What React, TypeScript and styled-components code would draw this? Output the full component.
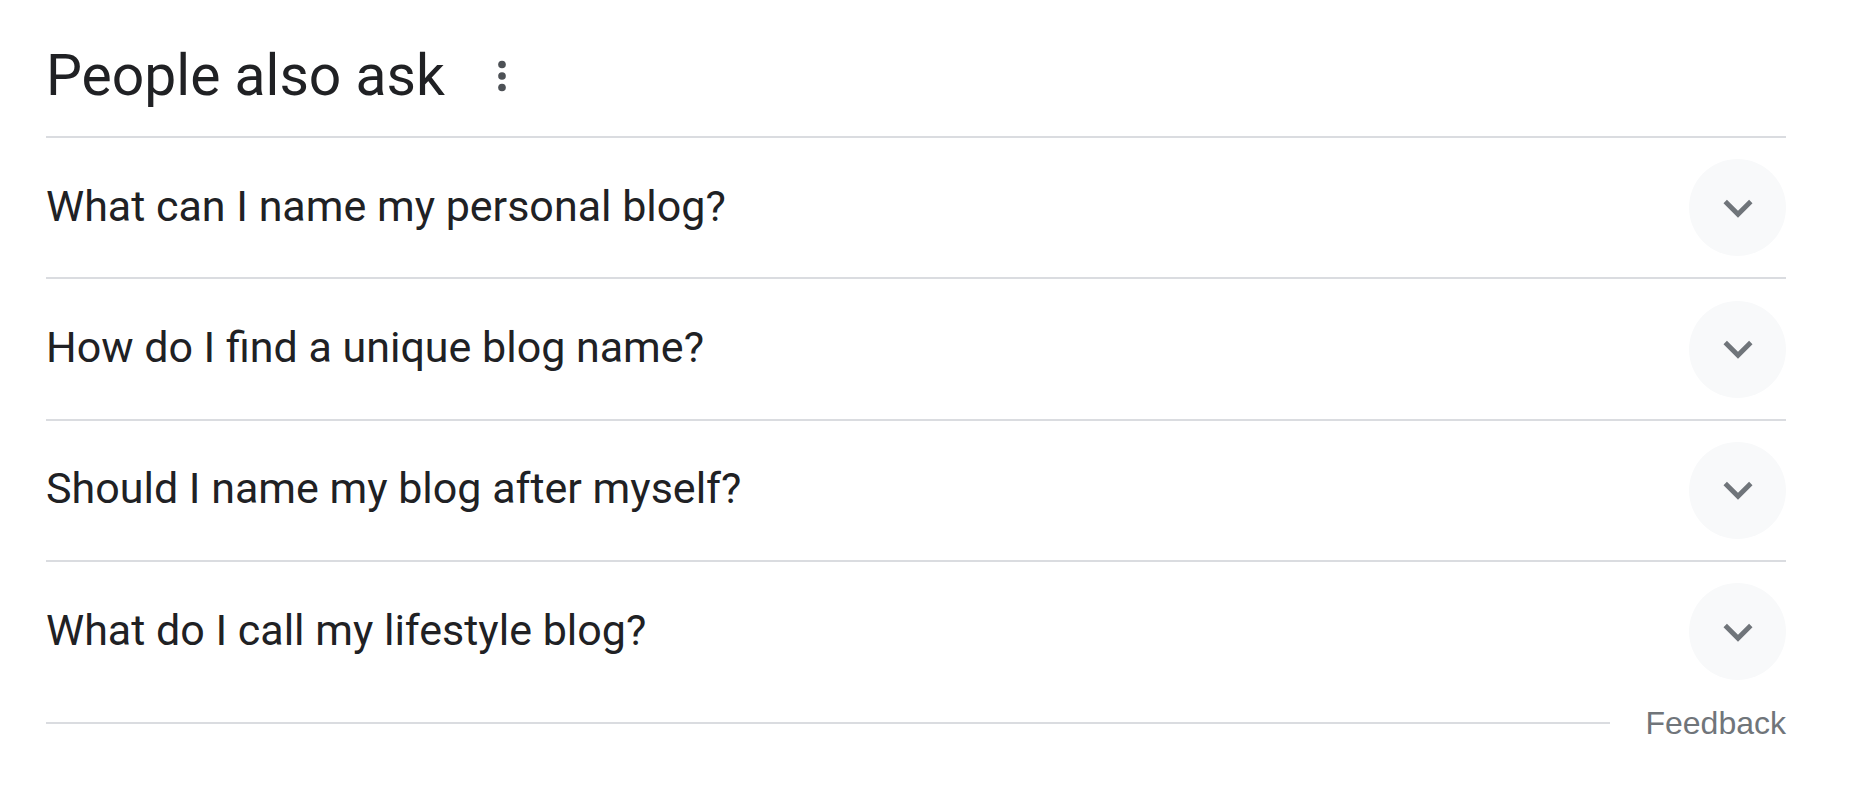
import React from "react";
import styled, { createGlobalStyle } from "styled-components";

const GlobalStyle = createGlobalStyle`
  html, body {
    margin: 0;
    padding: 0;
    background: #ffffff;
  }
  body {
    font-family: Roboto, "Noto Sans", Arial, sans-serif;
    color: #202124;
  }
`;

const questions = [
  "What can I name my personal blog?",
  "How do I find a unique blog name?",
  "Should I name my blog after myself?",
  "What do I call my lifestyle blog?",
];

const App: React.FC = () => {
  return (
    <>
      <GlobalStyle />
      <Section>
        <Header>
          <Title>People also ask</Title>
          <MenuButton aria-label="About this result">
            <svg width="46" height="46" viewBox="0 0 24 24">
              <circle cx="12" cy="6" r="2" fill="#4d5156" />
              <circle cx="12" cy="12" r="2" fill="#4d5156" />
              <circle cx="12" cy="18" r="2" fill="#4d5156" />
            </svg>
          </MenuButton>
        </Header>
        {questions.map((q) => (
          <Row key={q}>
            <Question>{q}</Question>
            <ExpandButton aria-label="Expand">
              <svg width="58" height="58" viewBox="0 0 24 24">
                <path
                  d="M16.59 8.59L12 13.17 7.41 8.59 6 10l6 6 6-6z"
                  fill="#70757a"
                />
              </svg>
            </ExpandButton>
          </Row>
        ))}
        <FooterRow>
          <Rule />
          <Feedback>Feedback</Feedback>
        </FooterRow>
      </Section>
    </>
  );
};

export default App;

const Section = styled.div`
  width: 1740px;
  margin-left: 46px;
`;

const Header = styled.div`
  display: flex;
  align-items: center;
  box-sizing: border-box;
  height: 136px;
  padding-bottom: 32px;
  padding-top: 47px;
`;

const Title = styled.h2`
  margin: 0;
  font-size: 57px;
  line-height: 57px;
  font-weight: 400;
  color: #202124;
`;

const MenuButton = styled.div`
  display: flex;
  margin-left: 34px;
`;

const Row = styled.div`
  display: flex;
  align-items: center;
  justify-content: space-between;
  height: 139.4px;
  border-top: 2px solid #dadce0;
`;

const Question = styled.div`
  margin-bottom: 4px;
  font-size: 43px;
  font-weight: 400;
  color: #202124;
`;

const ExpandButton = styled.div`
  display: flex;
  align-items: center;
  justify-content: center;
  width: 97px;
  height: 97px;
  border-radius: 50%;
  background: #f8f9fa;
`;

const FooterRow = styled.div`
  display: flex;
  align-items: center;
  height: 42px;
`;

const Rule = styled.div`
  flex: 1;
  height: 2px;
  background: #dadce0;
`;

const Feedback = styled.span`
  margin-left: 35px;
  font-family: "Liberation Sans", Arial, sans-serif;
  font-size: 32px;
  line-height: 42px;
  color: #70757a;
`;
